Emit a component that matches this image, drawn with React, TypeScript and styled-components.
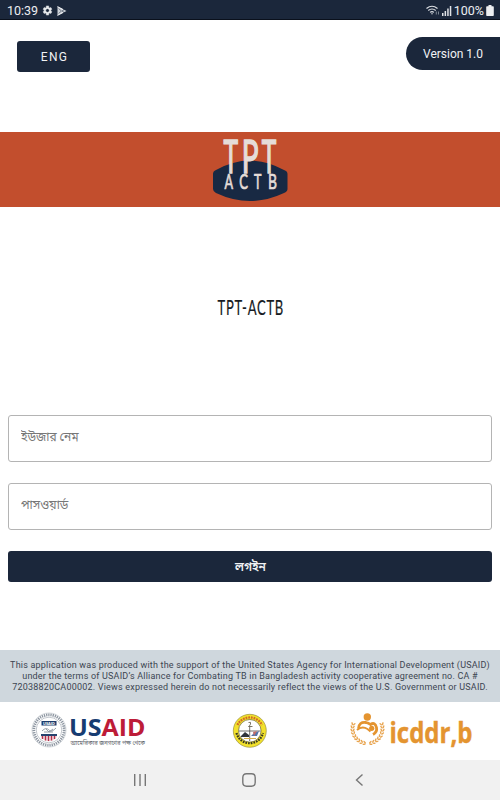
import React, { useState } from 'react'
import styled, { createGlobalStyle } from 'styled-components'

const NAVY = '#1b273b'
const BANGLA = "Roboto, 'Noto Sans Bengali', 'Noto Sans', sans-serif"

const GlobalStyle = createGlobalStyle`
  * { box-sizing: border-box; }
  body {
    margin: 0;
    background: #fff;
    font-family: Roboto, sans-serif;
  }
  svg { display: block; overflow: visible; }
`

const Screen = styled.div`
  width: 500px;
  height: 800px;
  display: flex;
  flex-direction: column;
  overflow: hidden;
  background: #fff;
`

const StatusBar = styled.div`
  height: 20px;
  flex: none;
  display: flex;
  align-items: center;
  justify-content: space-between;
  padding: 2px 6px 0 7px;
  background: ${NAVY};
  border-bottom: 1px solid #0a101c;
  color: #eceef1;
  font-size: 12.5px;
  line-height: 17px;
`

const StatusGroup = styled.div<{ $gap: number }>`
  display: flex;
  align-items: center;
  gap: ${(p) => p.$gap}px;
`

const TopRow = styled.div`
  height: 112px;
  flex: none;
  display: flex;
  justify-content: space-between;
  align-items: flex-start;
  padding: 17px 0 0 17px;
`

const LangButton = styled.button`
  width: 73px;
  height: 31px;
  margin-top: 4px;
  padding: 1px 0 0 2px;
  border: 0;
  border-radius: 3px;
  background: ${NAVY};
  color: #f1f2f4;
  font: 400 12px Roboto, sans-serif;
  letter-spacing: 1.3px;
`

const Version = styled.div`
  width: 94px;
  height: 33px;
  padding-left: 17px;
  border-radius: 17px 0 0 17px;
  background: ${NAVY};
  color: #f1f2f4;
  font-size: 12px;
  line-height: 34px;
`

const Banner = styled.div`
  height: 75px;
  flex: none;
  display: flex;
  justify-content: center;
  background: #c24e2d;
`

const Title = styled.h1`
  height: 208px;
  flex: none;
  display: flex;
  justify-content: center;
  margin: 0;
  padding-top: 87px;
`

const Form = styled.form`
  height: 235px;
  flex: none;
  display: flex;
  flex-direction: column;
  padding: 0 8px;
`

const Field = styled.input`
  height: 47px;
  width: 100%;
  margin-bottom: 21px;
  padding: 0 12px 4px;
  border: 1px solid #b4b4b4;
  border-radius: 3px;
  outline: 0;
  color: #222;
  font: 400 12px ${BANGLA};
  &::placeholder {
    color: #777;
    opacity: 1;
  }
`

const LoginButton = styled.button`
  height: 31px;
  padding: 2px 0 0 1px;
  border: 0;
  border-radius: 3px;
  background: ${NAVY};
  color: #f1f2f4;
  font: 600 12px ${BANGLA};
`

const Disclaimer = styled.div`
  height: 52px;
  flex: none;
  display: flex;
  flex-direction: column;
  align-items: center;
  padding-top: 10px;
  background: #cfd7dd;
  color: #3c4551;
  font-size: 9px;
  line-height: 11.2px;
  letter-spacing: 0.2px;
  white-space: nowrap;
`

const Partners = styled.div`
  height: 58px;
  flex: none;
  display: grid;
  grid-template-columns: 116px 36px 124px;
  justify-content: space-between;
  align-items: start;
  padding: 9px 26px 0 31px;
`

const NavBar = styled.div`
  height: 40px;
  flex: none;
  display: flex;
  justify-content: space-between;
  align-items: center;
  padding: 0 135px 0 133px;
  background: #f1f1f1;
`

const GearIcon = () => (
  <svg width="11" height="11" viewBox="0 0 24 24" fill="#e6e8eb" stroke="#e6e8eb" strokeWidth="1">
    <path fillRule="evenodd" d="M19.400 13a7.500 7.500 0 0 0 0-2l2.200-1.700-2.200-3.800-2.700 1a7.500 7.500 0 0 0-1.800-1L14.500 2h-5l-.4 3.500a7.500 7.500 0 0 0-1.800 1l-2.700-1-2.200 3.800L4.600 11a7.500 7.500 0 0 0 0 2l-2.200 1.700 2.200 3.800 2.700-1c.6.400 1.100.8 1.800 1l.4 3.500h5l.4-3.500c.7-.2 1.200-.6 1.800-1l2.700 1 2.200-3.800zM12 16a4 4 0 1 1 0-8 4 4 0 0 1 0 8z" />
  </svg>
)

const PlayIcon = () => (
  <svg width="10" height="10" viewBox="0 0 10 10">
    <path d="M.5.5v9L9.500 5z" fill="#cdd2d8" />
    <path d="M1.500 2.500 4.500 5 1.500 7.500M5 5l2-1.300M5 5l2 1.300" fill="none" stroke={NAVY} strokeWidth=".5" />
    <path d="M.5.6 6 3.500M.5 9.400 6 6.500" stroke="#f1f2f4" />
  </svg>
)

const WifiIcon = () => (
  <svg width="14" height="11" viewBox="0 0 14 11" fill="none" stroke="#dfe2e6" strokeWidth="1.200">
    <path d="M.5 3.500Q6 -1 11.500 3.500M2.300 5.500Q6 2.500 9.700 5.500M4.100 7.400Q6 5.900 7.900 7.400" />
    <circle cx="6" cy="8.700" r=".7" fill="#dfe2e6" stroke="none" />
    <path d="M10.300 9.500V6.500M12.500 6.500v3" stroke="#7c8693" strokeWidth="1" />
  </svg>
)

const SignalIcon = () => (
  <svg width="10" height="10" viewBox="0 0 10 10" fill="#dfe2e6">
    <path d="M0 7h1.500v3H0zM2.600 5h1.500v5H2.600zM5.200 2.500h1.500V10H5.200zM7.800 0h1.500v10H7.800z" />
  </svg>
)

const BatteryIcon = () => (
  <svg width="8" height="11" viewBox="0 0 8 11">
    <path d="M2.500 0h3v1.200H7A.8.8 0 0 1 7.800 2v8.200a.8.8 0 0 1-.8.8H1a.8.800 0 0 1-.8-.8V2A.8.8 0 0 1 1 1.200h1.500z" fill="#eceef1" />
  </svg>
)

const bigLetters = [
  { letter: 'T', x: 223.6, scale: 0.53 },
  { letter: 'P', x: 241.8, scale: 0.6 },
  { letter: 'T', x: 261.8, scale: 0.53 },
]

const smallLetters = [
  { letter: 'A', x: 224.5, scale: 0.6 },
  { letter: 'C', x: 239.3, scale: 0.62 },
  { letter: 'T', x: 254, scale: 0.6 },
  { letter: 'B', x: 268, scale: 0.66 },
]

const AppLogo = () => (
  <svg width="76" height="75" viewBox="212 132 76 75">
    <path d="M213 174Q213 171 216 170Q250 151 284 170Q287.500 171 287.500 174V189Q287.500 191.500 284 193Q250 209 216 193Q213 191.500 213 189Z" fill="#182943" />
    <g fill="#e5ddd8" stroke="#e5ddd8" fontFamily="Lato, sans-serif">
      {bigLetters.map((l) => (
        <text key={l.x} transform={`translate(${l.x} 172.500) scale(${l.scale} 1)`} fontSize="46.500" strokeWidth="1.300" style={{ vectorEffect: 'non-scaling-stroke' }}>{l.letter}</text>
      ))}
      {smallLetters.map((l) => (
        <text key={l.x} transform={`translate(${l.x} 188.700) scale(${l.scale} 1)`} fontSize="21" strokeWidth=".6" style={{ vectorEffect: 'non-scaling-stroke' }}>{l.letter}</text>
      ))}
    </g>
  </svg>
)

const TitleText = () => (
  <svg width="68" height="26" viewBox="0 0 68 26">
    <text x="1.500" y="20.500" fontFamily="Lato, sans-serif" fontSize="21.500" fontWeight="400" letterSpacing="1.200" textLength="66.500" lengthAdjust="spacingAndGlyphs" fill="#171b22" stroke="#171b22" strokeWidth=".2">TPT-ACTB</text>
  </svg>
)

const UsaidLogo = () => (
  <svg width="116" height="40" viewBox="31 711 116 40">
    <circle cx="49" cy="730" r="15.200" fill="none" stroke="#8c95a0" strokeWidth="2.800" strokeDasharray="1.300 .9" />
    <circle cx="49" cy="730" r="17" fill="none" stroke="#a9b0b8" strokeWidth=".5" />
    <circle cx="49" cy="730" r="12.800" fill="#fff" stroke="#9aa3ad" strokeWidth=".6" />
    <rect x="41.500" y="721" width="15" height="4.500" fill="#1d3c6d" />
    <text x="43" y="724.800" fontFamily="Open Sans, sans-serif" fontWeight="700" fontSize="4" textLength="12" lengthAdjust="spacingAndGlyphs" fill="#fff">USAID</text>
    <path d="M42 731c3-3 5-3 7-1s4 1 7-2M44 732h9M46 729l3 3 4-3" fill="none" stroke="#8a949f" strokeWidth=".9" />
    <path d="M41 734h16v3q-3 4-8 4.500q-5-.5-8-4.500z" fill="#f2dde0" />
    <path d="M42.500 736v3M45.500 736v4.500M48.500 736v5M51.500 736v4.500M54.500 736v3" stroke="#b4304a" strokeWidth="1.400" />
    <path d="M41 735h16" stroke="#26436f" strokeWidth="2" />
    <text x="69" y="735.600" fontFamily="Open Sans, sans-serif" fontWeight="700" fontSize="23.300" textLength="76.500" lengthAdjust="spacingAndGlyphs" fill="#173c72">
      US<tspan fill="#bd1c38">AID</tspan>
    </text>
    <text x="70.500" y="745" fontFamily={BANGLA} fontSize="6.500" textLength="74.500" lengthAdjust="spacingAndGlyphs" fill="#5d636b">আমেরিকার জনগণের পক্ষ থেকে</text>
  </svg>
)

const ProgramSeal = () => (
  <svg width="36" height="40" viewBox="231 711 36 40">
    <circle cx="249.800" cy="730.800" r="16.500" fill="#f2e12c" stroke="#8a8238" strokeWidth=".6" />
    <path d="M237.500 725A13.700 13.700 0 0 1 262 725" fill="none" stroke="#d16b25" strokeWidth="2.300" strokeDasharray="1.800 .9" />
    <path d="M236.500 733A13.700 13.700 0 0 0 263 733" fill="none" stroke="#39391f" strokeWidth="2.300" strokeDasharray="1.700 1" />
    <circle cx="249.800" cy="730.800" r="11.300" fill="#fff" stroke="#68622a" strokeWidth=".7" />
    <path d="M239 731h21.500M249.700 726v15" stroke="#4b4b48" strokeWidth=".8" />
    <path d="M248.500 722.500q3-1 2 1.500t-2 2.500h4" fill="none" stroke="#6e6656" strokeWidth=".9" />
    <path d="M241 736l4-4 4 3v2h-8z" fill="#30343b" />
    <path d="M251 736l3-3 5-2-2 5z" fill="#5375aa" />
    <path d="M253 732l4-1-3 5z" fill="#c36b68" />
    <path d="M244 738.500h12" stroke="#d8af48" />
  </svg>
)

const wreathAngles = [160, 172, 184, 196, 208, 220, 232, 244, 256]

const IcddrbLogo = () => (
  <svg width="124" height="40" viewBox="350 711 124 40" fill="#e49430">
    <circle cx="367.300" cy="717" r="3.700" />
    <circle cx="371.700" cy="728.300" r="2.600" />
    <path d="M358.500 728.500Q359 721.500 366 722.500Q368.500 723 370.500 724.500Q375 721.500 376.500 727.500Q377.500 732 373 734.500" fill="none" stroke="#e49430" strokeWidth="2.800" />
    <path d="M357 730q5-4.500 10.500-1l3 2.500" fill="none" stroke="#e49430" strokeWidth="1.900" />
    {[1, -1].map((side) => (
      <g key={side} transform={`translate(367.500 728.500) scale(${side} 1)`}>
        {wreathAngles.map((angle) => (
          <g key={angle} transform={`rotate(${180 - angle}) translate(-15 0)`}>
            <ellipse cx="-1.200" cy="0" rx=".75" ry="1.700" transform="rotate(-30)" opacity=".85" />
            <ellipse cx="1.200" cy="0" rx=".75" ry="1.700" transform="rotate(30)" opacity=".85" />
          </g>
        ))}
      </g>
    ))}
    <text x="389.500" y="743.300" fontFamily="Open Sans, sans-serif" fontWeight="700" fontSize="28" textLength="83" lengthAdjust="spacingAndGlyphs" stroke="#e49430" strokeWidth=".4">icddr,b</text>
  </svg>
)

const NavIcon = ({ path }: { path: string }) => (
  <svg width="14" height="14" viewBox="0 0 14 14" fill="none" stroke="#777" strokeWidth="1.400">
    <path d={path} />
  </svg>
)

const App = () => {
  const [username, setUsername] = useState('')
  const [password, setPassword] = useState('')

  return (
    <>
      <GlobalStyle />
      <Screen>
        <StatusBar>
          <StatusGroup $gap={4}>
            <span>10:39</span>
            <GearIcon />
            <PlayIcon />
          </StatusGroup>
          <StatusGroup $gap={2}>
            <WifiIcon />
            <SignalIcon />
            <span>100%</span>
            <BatteryIcon />
          </StatusGroup>
        </StatusBar>

        <TopRow>
          <LangButton type="button">ENG</LangButton>
          <Version>Version 1.0</Version>
        </TopRow>

        <Banner>
          <AppLogo />
        </Banner>
        <Title>
          <TitleText />
        </Title>

        <Form onSubmit={(e) => e.preventDefault()}>
          <Field placeholder="ইউজার নেম" value={username} onChange={(e) => setUsername(e.target.value)} />
          <Field type="password" placeholder="পাসওয়ার্ড" value={password} onChange={(e) => setPassword(e.target.value)} />
          <LoginButton type="submit">লগইন</LoginButton>
        </Form>

        <Disclaimer>
          <span>This application was produced with the support of the United States Agency for International Development (USAID)</span>
          <span>under the terms of USAID’s Alliance for Combating TB in Bangladesh activity cooperative agreement no. CA #</span>
          <span>72038820CA00002. Views expressed herein do not necessarily reflect the views of the U.S. Government or USAID.</span>
        </Disclaimer>

        <Partners>
          <UsaidLogo />
          <ProgramSeal />
          <IcddrbLogo />
        </Partners>

        <NavBar>
          <NavIcon path="M1.700 1v12M7 1v12M12.300 1v12" />
          <NavIcon path="M4.500.8h5q3.700 0 3.700 3.700v5q0 3.700-3.700 3.700h-5Q.8 13.200.8 9.500v-5Q.8.800 4.500.8z" />
          <NavIcon path="M11.500 1.500 5.500 7l6 5.500" />
        </NavBar>
      </Screen>
    </>
  )
}

export default App
